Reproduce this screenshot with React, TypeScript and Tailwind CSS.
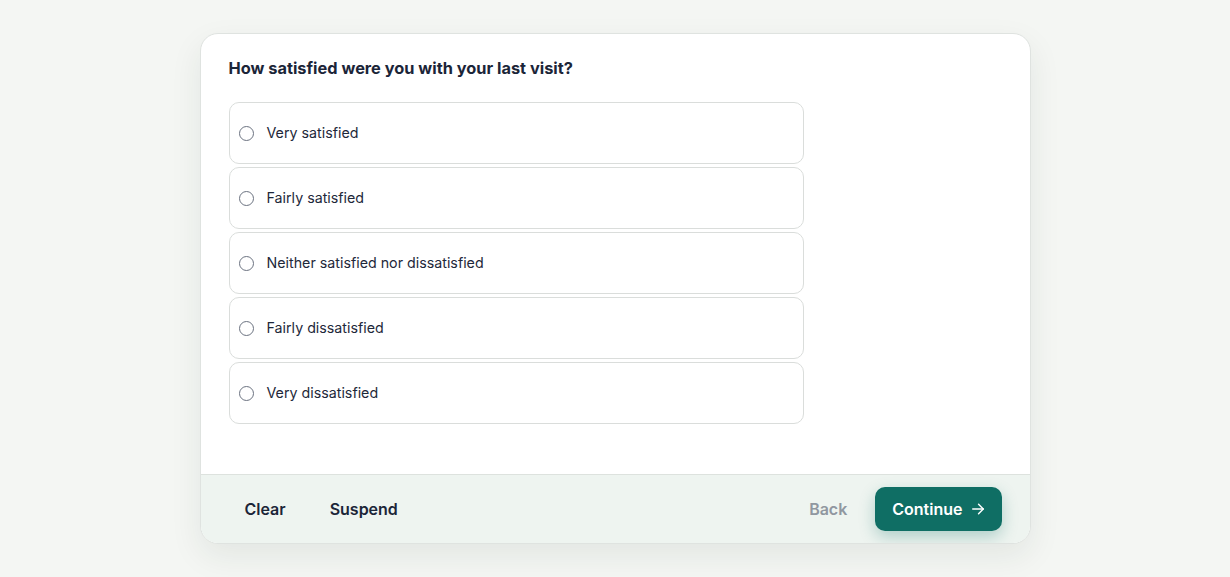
import React from "react";

const options = [
  "Very satisfied",
  "Fairly satisfied",
  "Neither satisfied nor dissatisfied",
  "Fairly dissatisfied",
  "Very dissatisfied",
];

const ArrowRight = () => (
  <svg
    width="14"
    height="14"
    viewBox="0 0 24 24"
    fill="none"
    stroke="currentColor"
    strokeWidth="2.5"
    strokeLinecap="round"
    strokeLinejoin="round"
  >
    <path d="M3 12h18" />
    <path d="m13 4 8 8-8 8" />
  </svg>
);

const App: React.FC = () => {
  return (
    <div
      className="min-h-screen bg-[#f4f6f3] flex justify-center pt-[33px]"
      style={{ fontFamily: "Inter, 'Noto Sans', sans-serif" }}
    >
      <div className="w-[831px] h-[511px] flex flex-col bg-white border border-[#dfe3e0] rounded-[18px] overflow-hidden shadow-[0_12px_32px_rgba(30,45,35,0.08)]">
        <div className="flex-1 px-7 pt-[22px]">
          <h1 className="text-[16.35px] leading-6 font-bold text-[#1b2538] mb-[22px]">
            How satisfied were you with your last visit?
          </h1>
          <div className="flex flex-col gap-[3px] w-[575px]">
            {options.map((o) => (
              <label
                key={o}
                className="h-[62px] flex items-center gap-[13px] px-[9px] border border-[#dadddb] rounded-[10px] cursor-pointer"
              >
                <span className="w-[15px] h-[15px] rounded-full border border-[#6b7280] bg-white" />
                <span className="text-[14.25px] text-[#1e283a]">{o}</span>
              </label>
            ))}
          </div>
        </div>
        <div className="h-[69px] border-t border-[#dde2de] bg-[#eef4f0] px-7 flex items-center justify-between">
          <div className="flex items-center gap-3">
            <button className="px-4 h-11 text-[16px] font-semibold text-[#1b2538]">
              Clear
            </button>
            <button className="px-4 h-11 text-[16px] font-semibold text-[#1b2538]">
              Suspend
            </button>
          </div>
          <div className="flex items-center gap-3">
            <button className="px-4 h-11 text-[16px] font-semibold text-[#9097a0]">
              Back
            </button>
            <button className="h-11 px-[17px] flex items-center gap-2 rounded-[10px] bg-[#0f6e64] text-white text-[16px] font-semibold shadow-[0_6px_16px_rgba(15,110,100,0.28)]">
              Continue
              <ArrowRight />
            </button>
          </div>
        </div>
      </div>
    </div>
  );
};

export default App;
